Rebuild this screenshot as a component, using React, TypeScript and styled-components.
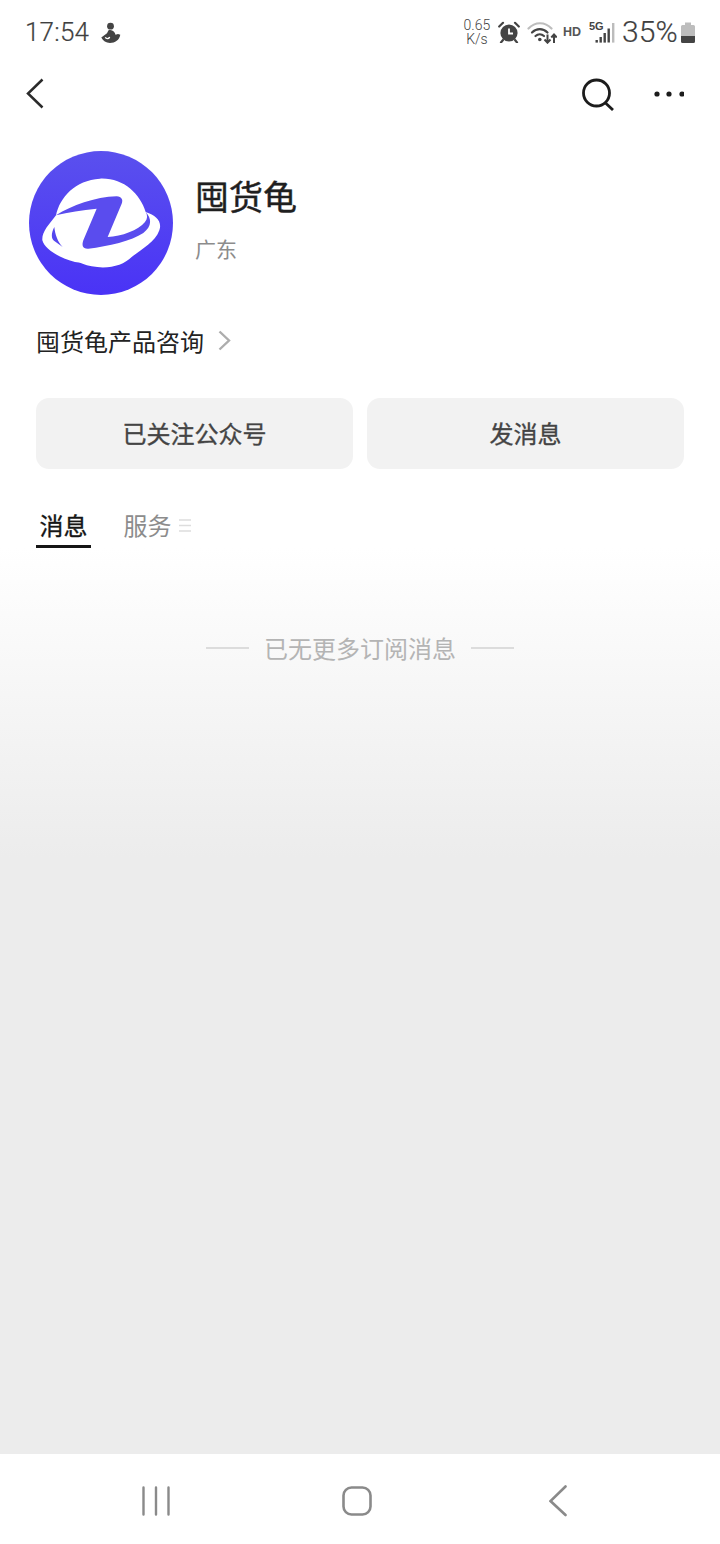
import React from "react";
import styled, { createGlobalStyle } from "styled-components";

const Global = createGlobalStyle`
  html, body { margin: 0; padding: 0; background: #fff; }
  * { box-sizing: border-box; }
  body { font-family: "Noto Sans CJK SC", "Noto Sans", sans-serif; }
`;

const Page = styled.div`
  width: 720px;
  height: 1544px;
  display: flex;
  flex-direction: column;
  background: #fff;
  overflow: hidden;
`;

const StatusBar = styled.div`
  height: 64px;
  display: flex;
  align-items: center;
  justify-content: space-between;
  padding: 0 25px;
  color: #444;
  font-family: Roboto, "Liberation Sans", sans-serif;
`;
const StatusGroup = styled.div<{ $gap: number }>`
  display: flex;
  align-items: center;
  gap: ${(p) => p.$gap}px;
`;
const Time = styled.span`
  font-size: 26px;
  font-weight: 300;
  line-height: 32px;
  letter-spacing: 0.2px;
  color: #3f3f3f;
  -webkit-text-stroke: 0.2px #444;
`;
const Speed = styled.span`
  width: 28px;
  font-size: 14px;
  line-height: 14px;
  text-align: center;
  font-weight: 300;
  color: #444;
  white-space: pre-line;
  margin-right: 7px;
`;
const AlarmSlot = styled.span`
  display: flex;
  margin-right: 7px;
`;
const Hd = styled.span`
  font-family: "Liberation Sans", sans-serif;
  font-size: 12.5px;
  font-weight: 700;
  color: #555;
  margin: 0 8px 0 6px;
`;
const Battery = styled.span`
  font-size: 30px;
  font-weight: 300;
  line-height: 32px;
  letter-spacing: 0.2px;
  color: #3f3f3f;
  -webkit-text-stroke: 0.2px #444;
  margin: 0 3px 0 7px;
`;

const NavRow = styled.div`
  height: 60px;
  display: flex;
  align-items: center;
  justify-content: space-between;
  padding: 0 36px 0 26px;
`;
const BackSlot = styled.span`
  display: flex;
  margin-top: -2px;
`;
const NavActions = styled.div`
  display: flex;
  align-items: center;
  gap: 40px;
`;

const Profile = styled.div`
  display: flex;
  margin: 27px 0 0 29px;
`;
const Avatar = styled.svg`
  width: 144px;
  height: 144px;
  display: block;
  flex: none;
`;
const Info = styled.div`
  margin-left: 22px;
  padding-top: 20px;
  display: flex;
  flex-direction: column;
  gap: 12px;
`;
const Name = styled.div`
  font-size: 34px;
  line-height: 50px;
  font-weight: 400;
  color: #1f1f1f;
  -webkit-text-stroke: 0.45px #1f1f1f;
`;
const Region = styled.div`
  font-size: 21px;
  line-height: 30px;
  color: #8c8c8c;
`;

const ServiceLink = styled.div`
  margin: 25px 0 2px 36px;
  height: 40px;
  display: flex;
  align-items: center;
  gap: 14px;
  font-size: 24px;
  color: #222;
`;

const Actions = styled.div`
  display: grid;
  grid-template-columns: 1fr 1fr;
  gap: 14px;
  margin: 36px 36px 0;
`;
const ActionButton = styled.div`
  height: 71px;
  padding-bottom: 2px;
  border-radius: 13px;
  background: #f2f2f2;
  color: #444;
  font-size: 24px;
  font-weight: 400;
  -webkit-text-stroke: 0.35px #444;
  display: flex;
  align-items: center;
  justify-content: center;
`;

const Tabs = styled.div`
  display: flex;
  margin: 36px 0 0 36px;
`;
const Tab = styled.div<{ $active?: boolean }>`
  height: 43px;
  line-height: 42px;
  padding: 0 3.5px;
  font-size: 24px;
  color: ${(p) => (p.$active ? "#161616" : "#8c8c8c")};
  font-weight: 400;
  -webkit-text-stroke: ${(p) => (p.$active ? "0.35px #161616" : "0")};
  border-bottom: 3px solid ${(p) => (p.$active ? "#161616" : "transparent")};
  display: flex;
  align-items: center;
  gap: 7px;
`;
const ServiceTab = styled(Tab)`
  margin-left: 29px;
`;

const Feed = styled.div`
  flex: 1;
  background: linear-gradient(#ffffff 0, #ececec 310px);
  padding-top: 84px;
`;
const EndNote = styled.div`
  height: 32px;
  padding-bottom: 2px;
  display: flex;
  align-items: center;
  justify-content: center;
  gap: 15px;
  font-size: 24px;
  color: #b4b4b4;
`;
const Rule = styled.span`
  width: 43px;
  height: 2px;
  margin-top: 1px;
  background: #dcdcdc;
`;

const BottomNav = styled.div`
  height: 90px;
  background: #fff;
  display: grid;
  grid-template-columns: repeat(3, 201px);
  align-items: center;
  justify-items: center;
  justify-content: center;
  padding: 4px 6px 0 0;
`;

const Person = () => (
  <svg width="21" height="23" viewBox="0 0 21 23">
    <circle cx="10.5" cy="5.2" r="3.4" fill="#444" />
    <path d="M8.5 9.2C12 8 15 10.500 15.500 13.800L18 13L20.300 13.800C19.500 19 15 22 10 22C6 22 3 19.800 1.300 16.500L7 12.300Z" fill="#444" />
    <path d="M5.500 16.800C7 17.800 8.500 17.800 9.500 16.500" fill="none" stroke="#fff" strokeWidth="1.300" strokeLinecap="round" />
  </svg>
);

const Alarm = () => (
  <svg width="22" height="22" viewBox="0 0 22 22">
    <circle cx="11" cy="12" r="8.600" fill="#444" />
    <path d="M11 7.500V12.500H15" fill="none" stroke="#fff" strokeWidth="1.800" />
    <path d="M1.200 5.500 5 1.800M20.800 5.500 17 1.800M5 19l-2 2.500M17 19l2 2.500" stroke="#444" strokeWidth="2.200" strokeLinecap="round" />
  </svg>
);

const Wifi = () => (
  <svg width="30" height="24" viewBox="0 0 30 24" fill="none">
    <path d="M1.500 8.500C8 1.500 18 1.500 24.500 8.500" stroke="#bdbdbd" strokeWidth="2.200" strokeLinecap="round" />
    <path d="M5 12.500C9.500 8 16 8 20.500 12.500" stroke="#444" strokeWidth="2.200" strokeLinecap="round" />
    <path d="M8.500 16C11 13.800 14.500 13.800 17 16" stroke="#444" strokeWidth="2.200" strokeLinecap="round" />
    <circle cx="12.800" cy="19.500" r="1.800" fill="#444" />
    <path d="M20.500 14.500v8M17.500 19.500l3 3.200 3-3.200" stroke="#444" strokeWidth="2" />
    <path d="M27 23v-8.500M24.300 17.500 27 14.500l2.700 3" stroke="#444" strokeWidth="2" />
  </svg>
);

const Signal = () => (
  <svg width="26" height="24" viewBox="0 0 26 24" fill="none">
    <text x="0" y="9.500" fontFamily="Liberation Sans, sans-serif" fontSize="11" fontWeight="700" fill="#444">5G</text>
    <rect x="6.500" y="20" width="2.400" height="2.600" fill="#444" />
    <rect x="10.500" y="17" width="2.400" height="5.600" fill="#444" />
    <rect x="14.500" y="13" width="2.400" height="9.600" fill="#444" />
    <rect x="18.500" y="8.500" width="2.400" height="14" fill="#444" />
    <rect x="23" y="3" width="2.400" height="19.600" fill="#bcbcbc" />
  </svg>
);

const BatteryIcon = () => (
  <svg width="14" height="21" viewBox="0 0 14 21">
    <path d="M4 0.500h6v2.500h2.500a1.500 1.500 0 0 1 1.500 1.500V14H0V4.500A1.500 1.500 0 0 1 1.500 3H4Z" fill="#bdbdbd" />
    <path d="M0 14h14v5.500a1.500 1.500 0 0 1-1.500 1.500h-11A1.500 1.500 0 0 1 0 19.500Z" fill="#444" />
  </svg>
);

const BackIcon = () => (
  <svg width="18" height="31" viewBox="0 0 18 31" fill="none">
    <path d="M16.500 1.500 2 15.500l14.500 14" stroke="#2b2b2b" strokeWidth="2.500" />
  </svg>
);

const SearchIcon = () => (
  <svg width="32" height="33" viewBox="0 0 32 33" fill="none">
    <circle cx="14.500" cy="15" r="13" stroke="#1c1c1c" strokeWidth="2.800" />
    <path d="M23.500 25 31 32" stroke="#1c1c1c" strokeWidth="2.800" />
  </svg>
);

const MoreIcon = () => (
  <svg width="30" height="6" viewBox="0 0 30 6">
    <circle cx="3" cy="3" r="2.600" fill="#1c1c1c" />
    <circle cx="15" cy="3" r="2.600" fill="#1c1c1c" />
    <circle cx="28" cy="3" r="2.600" fill="#1c1c1c" />
  </svg>
);

const Logo = () => (
  <Avatar viewBox="12 12 432 432">
    <defs>
      <linearGradient id="logoFill" x1="0" y1="0" x2="0" y2="1">
        <stop offset="0" stopColor="#5a50ee" />
        <stop offset="1" stopColor="#4a33f6" />
      </linearGradient>
    </defs>
    <circle cx="228" cy="228" r="216" fill="url(#logoFill)" />
    <path
      d="M93 205C105 150 150 100 225 95C295 92 345 140 362 195C395 205 412 225 403 250C392 285 345 310 320 330C295 355 250 368 200 358C180 355 165 345 150 345C110 335 60 310 52 280C50 255 70 235 93 205Z"
      fill="#fff"
    />
    <path
      d="M93 205C140 175 210 150 275 148C290 150 295 158 290 170L248 270C290 268 340 250 360 225C368 215 368 205 362 195C380 215 382 237 355 258C320 282 250 298 190 305C172 306 170 295 175 280L215 185C170 190 130 195 93 205Z"
      fill="#5a4cee"
    />
    <path d="M88 240C78 258 78 275 88 282L113 300C98 285 90 262 88 240Z" fill="#5547ee" />
  </Avatar>
);

const ChevronRight = () => (
  <svg width="13" height="21" viewBox="0 0 13 21" fill="none">
    <path d="M1.500 1.500 11 10.500l-9.500 9" stroke="#adadad" strokeWidth="2.400" />
  </svg>
);

const MenuLines = () => (
  <svg width="12" height="13" viewBox="0 0 12 13">
    <path d="M0 1h12M0 6.500h12M0 12h12" stroke="#dddddd" strokeWidth="1.600" />
  </svg>
);

const RecentsIcon = () => (
  <svg width="28" height="30" viewBox="0 0 28 30" fill="none">
    <path d="M1.500 1.500v27M14 1.500v27M26.500 1.500v27" stroke="#8a8a8a" strokeWidth="2.400" strokeLinecap="round" />
  </svg>
);
const HomeIcon = () => (
  <svg width="30" height="30" viewBox="0 0 30 30" fill="none">
    <rect x="1.500" y="1.500" width="27" height="27" rx="8" stroke="#8a8a8a" strokeWidth="2.600" />
  </svg>
);
const SystemBackIcon = () => (
  <svg width="18" height="32" viewBox="0 0 18 32" fill="none">
    <path d="M16.500 1.500 1.500 16l15 14" stroke="#8a8a8a" strokeWidth="2.600" strokeLinecap="round" />
  </svg>
);

export default function App() {
  return (
    <Page>
      <Global />
      <StatusBar>
        <StatusGroup $gap={11}>
          <Time>17:54</Time>
          <Person />
        </StatusGroup>
        <StatusGroup $gap={0}>
          <Speed>{"0.65\nK/s"}</Speed>
          <AlarmSlot>
            <Alarm />
          </AlarmSlot>
          <Wifi />
          <Hd>HD</Hd>
          <Signal />
          <Battery>35%</Battery>
          <BatteryIcon />
        </StatusGroup>
      </StatusBar>

      <NavRow>
        <BackSlot>
          <BackIcon />
        </BackSlot>
        <NavActions>
          <SearchIcon />
          <MoreIcon />
        </NavActions>
      </NavRow>

      <Profile>
        <Logo />
        <Info>
          <Name>囤货龟</Name>
          <Region>广东</Region>
        </Info>
      </Profile>

      <ServiceLink>
        囤货龟产品咨询
        <ChevronRight />
      </ServiceLink>

      <Actions>
        <ActionButton>已关注公众号</ActionButton>
        <ActionButton>发消息</ActionButton>
      </Actions>

      <Tabs>
        <Tab $active>消息</Tab>
        <ServiceTab>
          服务
          <MenuLines />
        </ServiceTab>
      </Tabs>

      <Feed>
        <EndNote>
          <Rule />
          已无更多订阅消息
          <Rule />
        </EndNote>
      </Feed>

      <BottomNav>
        <RecentsIcon />
        <HomeIcon />
        <SystemBackIcon />
      </BottomNav>
    </Page>
  );
}
